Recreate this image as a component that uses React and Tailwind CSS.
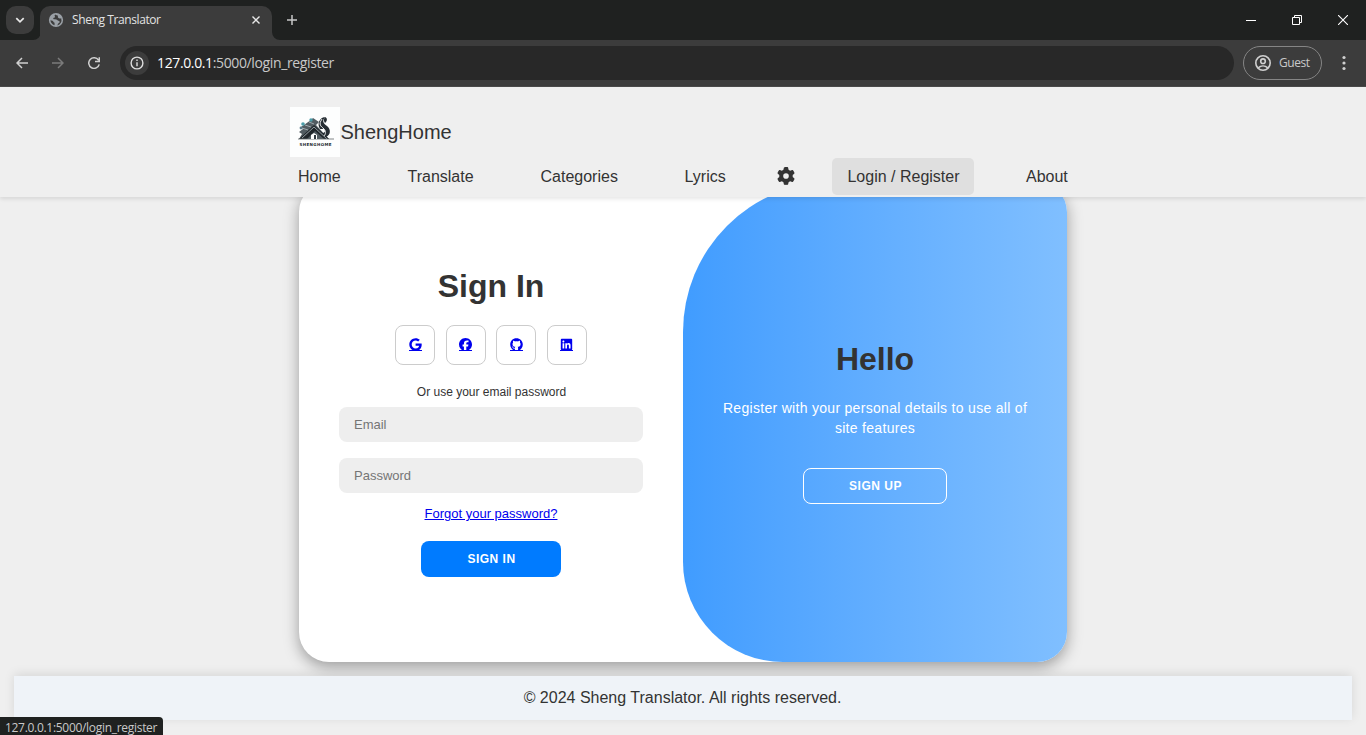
import { FaGoogle, FaFacebook, FaGithub, FaLinkedin, FaGear } from "react-icons/fa6";

const ui = "font-['Open_Sans',sans-serif]";

function BrowserChrome() {
  return (
    <div className={`h-[87px] border-b border-[#4a4a4a] bg-[#3c3c3c] ${ui}`}>
      <div className="flex h-10 bg-[#1f2120]">
        <div className="ml-1.5 mt-1.5 flex h-7 w-7 items-center justify-center rounded-[10px] bg-[#3c3c3c]">
          <svg width="10" height="10" viewBox="0 0 10 10" fill="none" stroke="#e8e8e8" strokeWidth="1.7"><path d="M1.3 3.2 5 6.9 8.7 3.2" /></svg>
        </div>
        <svg className="mt-8 -mr-px ml-[-1px]" width="8" height="8" viewBox="0 0 8 8"><path d="M8 0v8H0a8 8 0 0 0 8-8" fill="#3c3c3c" /></svg>
        <div className="mt-1.5 flex h-[34px] w-[232px] items-center rounded-t-[10px] bg-[#3c3c3c] pb-1.5 pl-2 pr-[11px]">
          <svg width="16" height="16" viewBox="0 0 16 16">
            <circle cx="8" cy="8" r="7.1" fill="#9aa0a6" />
            <path d="M7.500 2.500c-.8.6-1.200 1.100-.7 1.700.6.8-.2 1.500-1 1.600-.8.2-.7 1.200.1 1.400 1.600.2 3.200-.2 3.700 1.100.3.900 1.200.5 1.800.9.700.5.200 1.500-.6 1.900-.8.5-1 1.400-1.500 2.300a5.600 5.600 0 0 0 3.900-7.200c-1.100.3-2.400.3-3-.4-.7-.8.100-1.600-.6-2.200-.6-.4-1.400-.3-2.100-1.100M2.400 8.300c.3 2.400 1.700 4.200 4.100 5 .3-1-.2-1.600.2-2.500-1.400-.1-1.200-1.600-2.200-2-.8-.3-1.400-.2-2.100-.5" fill="#3c3c3c" />
          </svg>
          <span className="ml-2 flex-1 whitespace-nowrap text-[12px] tracking-[-0.4px] text-[#e3e3e3]">Sheng Translator</span>
          <svg width="10" height="10" viewBox="0 0 10 10" stroke="#e8e8e8" strokeWidth="1.4"><path d="m1.500 1.500 7 7m0-7-7 7" /></svg>
        </div>
        <svg className="mt-8" width="8" height="8" viewBox="0 0 8 8"><path d="M0 0v8h8a8 8 0 0 1-8-8" fill="#3c3c3c" /></svg>
        <svg className="ml-[7px] mt-[15px]" width="10" height="10" viewBox="0 0 10 10" stroke="#c7c7c7" strokeWidth="1.5"><path d="M5 0v10M0 5h10" /></svg>
        <div className="ml-auto mr-[18px] flex h-10 items-center gap-9">
          <svg width="10" height="10" viewBox="0 0 10 10" stroke="#fff"><path d="M0 5.500h10" /></svg>
          <svg width="10" height="10" viewBox="0 0 10 10" fill="none" stroke="#fff"><path d="M.5 2.500h7v7h-7zM2.500 2V.5h7v7H8" /></svg>
          <svg width="10" height="10" viewBox="0 0 10 10" stroke="#fff" strokeWidth="1.100"><path d="m0 0 10 10M10 0 0 10" /></svg>
        </div>
      </div>
      <div className="flex h-[46px] items-center pl-4">
        <svg width="12" height="12" viewBox="0 0 12 12" fill="none" stroke="#d0d0d0" strokeWidth="1.500"><path d="M12 6H1m5-5L1 6l5 5" /></svg>
        <svg className="ml-6" width="12" height="12" viewBox="0 0 12 12" fill="none" stroke="#7b7b7b" strokeWidth="1.500"><path d="M0 6h11M6 1l5 5-5 5" /></svg>
        <svg className="ml-6" width="12" height="12" viewBox="0 0 12 12" fill="none" stroke="#d0d0d0" strokeWidth="1.500"><path d="M11.200 7.300A5.300 5.300 0 1 1 10.500 3.200M11.300.2v4.300H7" /></svg>
        <div className="ml-5 flex h-[34px] w-[1114px] items-center rounded-full bg-[#282828] pl-[5px]">
          <div className="flex h-6 w-6 items-center justify-center rounded-full bg-[#3c3c3c]">
            <svg width="14" height="14" viewBox="0 0 14 14" fill="none" stroke="#dedede" strokeWidth="1.400"><circle cx="7" cy="7" r="5.900" /><path d="M7 6.300v4M7 3.600v1.500" /></svg>
          </div>
          <span className="mb-0.5 ml-2 whitespace-nowrap text-[14px] tracking-[-0.37px] text-[#c9c9c9]"><span className="text-white">127.0.0.1</span>:5000/login_register</span>
        </div>
        <div className="ml-[9px] flex h-[34px] w-[79px] items-center rounded-full border border-[#858585] pl-[11px]">
          <svg width="16" height="16" viewBox="0 0 16 16" fill="none" stroke="#d0d0d0" strokeWidth="1.600"><circle cx="8" cy="8" r="7.200" /><circle cx="8" cy="6.200" r="2.300" /><path d="M3.200 12.900c2.800-2.500 6.800-2.500 9.600 0" /></svg>
          <span className="ml-2 text-[12px] tracking-[-0.450px] text-[#c9c9c9]">Guest</span>
        </div>
        <svg className="ml-5" width="4" height="16" viewBox="0 0 4 16" fill="#d0d0d0"><circle cx="2" cy="2.500" r="1.600" /><circle cx="2" cy="8" r="1.600" /><circle cx="2" cy="13.500" r="1.600" /></svg>
      </div>
    </div>
  );
}

function Logo() {
  return (
    <svg width="50" height="50" viewBox="0 0 50 50">
      <rect width="50" height="50" fill="#fdfefe" />
      <path d="m11 20 10-7 2-2 6 4-3 3 13 14H9l3-5-3-2 4-3z" fill="#525c62" />
      <path d="m9 32 15-14 15 14h-5l-9-8-8 8z" fill="#20262b" />
      <path d="m12 31 12-11 13 12M12 21l6 2M15 18l6 2M19 15l5 2" fill="none" stroke="#b3bdc1" strokeWidth=".8" />
      <path d="M30 22c-3-5-1-11 5-12-3 4-2 6 2 9 4 3 4 9-1 11l-4-4c3 0 4-2 2-4z" fill="#262d33" />
      <path d="M32 12c-4 6-1 7 2 10 2 2 2 5 0 7" fill="none" stroke="#e7eaeb" strokeWidth="1" />
      <path d="M35 10c2.500 1 2.500 4 0 6-1.500-2-1.500-4 0-6" fill="#262d33" />
      <path d="M8 32h36" stroke="#60676b" strokeWidth=".8" />
      <path d="M21 32v-4l3-2 3 2v4z" fill="#fff" /><path d="M24 28h2v4h-2z" fill="#303940" />
      <circle cx="13" cy="17" r="1.800" fill="#4b9daa" /><circle cx="21" cy="13" r="1.700" fill="#4b9daa" /><circle cx="11" cy="21" r="1.400" fill="#56798a" />
      <text x="9.500" y="39" textLength="32" fontFamily="DejaVu Sans, sans-serif" fontWeight="bold" fontSize="4" fill="#20262b">SHENGHOME</text>
    </svg>
  );
}

function Header() {
  return (
    <header className="relative z-10 h-[110px] bg-[#efefef] pl-[290px] pt-5 shadow-[0_2px_4px_rgba(0,0,0,0.1)]">
      <div className="flex h-[50px] items-center text-[20px]"><Logo /><span className="ml-[0.500px]">ShengHome</span></div>
      <nav className="mt-px flex h-[37px] items-center whitespace-nowrap pl-2 text-[16px]">
        <a className="w-[109.500px]">Home</a>
        <a className="w-[133px]">Translate</a>
        <a className="w-[144px]">Categories</a>
        <a className="w-[92.500px]">Lyrics</a>
        <a className="mb-0.5 w-[55px]"><FaGear size={18} /></a>
        <a className="flex h-[37px] w-[142px] items-center justify-center rounded-[5px] bg-[#dfdfdf] pl-px">Login / Register</a>
        <a className="ml-[52px]">About</a>
      </nav>
    </header>
  );
}

function Social({ icon: Icon }) {
  return (
    <a className="flex h-10 w-10 items-center justify-center rounded-[8px] border border-[#ccc] text-[#0000ee]">
      <span className="relative mb-px flex h-[13px] justify-center">
        <Icon className="h-[13px] w-auto shrink-0" />
        <span className="absolute bottom-0 left-0 h-px w-full bg-[#0000ee]" />
      </span>
    </a>
  );
}

const input = "h-[35px] w-full rounded-[8px] bg-[#eee] px-[15px] text-[13px] outline-none placeholder:text-[#757575]";

export default function App() {
  return (
    <div className="relative h-[735px] overflow-hidden bg-[#efefef] font-['Liberation_Sans',Arial,sans-serif] text-[#333]">
      <BrowserChrome />
      <Header />
      <main className="mx-auto -mt-[15px] flex h-[480px] w-[768px] overflow-hidden rounded-[30px] bg-white shadow-[0_5px_15px_rgba(0,0,0,0.35)]">
        <form className="flex w-1/2 flex-col items-center px-10 pt-[86px]">
          <h1 className="text-[32px] font-bold leading-[37px]">Sign In</h1>
          <div className="mt-5 flex gap-[10.600px]">
            <Social icon={FaGoogle} /><Social icon={FaFacebook} /><Social icon={FaGithub} /><Social icon={FaLinkedin} />
          </div>
          <span className="mt-5 pl-px text-[12px] leading-[14px]">Or use your email password</span>
          <input className={`${input} mt-2`} placeholder="Email" />
          <input className={`${input} mt-4`} placeholder="Password" />
          <a className="mt-[13px] text-[13px] leading-[15px] text-[#0000ee] underline">Forgot your password?</a>
          <button type="button" className="mt-5 h-9 w-[140px] rounded-[8px] bg-[#007bff] pl-px text-[12px] font-bold tracking-[0.500px] text-white">SIGN IN</button>
        </form>
        <section className="flex w-1/2 flex-col items-center rounded-bl-[100px] rounded-tl-[150px] bg-linear-to-r from-[#409cff] to-[#80bfff] px-[30px] pt-[159px]">
          <h1 className="text-[32px] font-bold leading-[37px]">Hello</h1>
          <p className="mt-5 text-center text-[14px] leading-5 tracking-[0.300px] text-white">Register with your personal details to use all of<br />site features</p>
          <button type="button" className="mt-[30px] h-9 w-36 rounded-[8px] border border-white pl-px text-[12px] font-bold tracking-[0.500px] text-white">SIGN UP</button>
        </section>
      </main>
      <footer className="mx-3.5 mt-3.5 flex h-11 items-center justify-center bg-[#eff3f8] pr-px text-[16px] shadow-[0_-2px_10px_rgba(0,0,0,0.1)]">© 2024 Sheng Translator. All rights reserved.</footer>
      <div className={`absolute bottom-0 left-0 h-[18px] w-[163px] whitespace-nowrap rounded-tr-[4px] bg-[#1f2120] pl-[5px] pt-px text-[12px] leading-[20px] tracking-[-0.300px] text-[#c9c9c9] ${ui}`}>127.0.0.1:5000/login_register</div>
    </div>
  );
}
